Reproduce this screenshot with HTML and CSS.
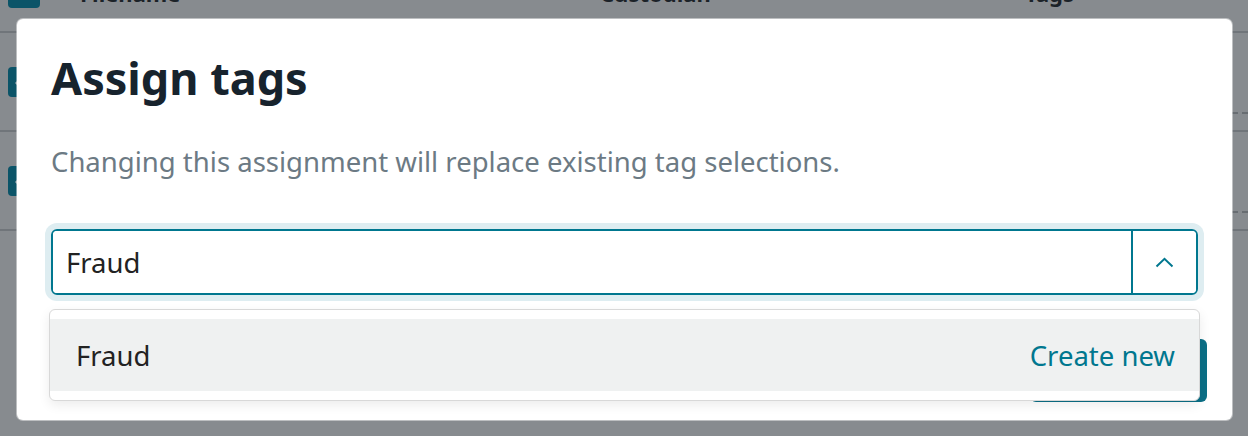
FILE: index.html
```html
<!DOCTYPE html>
<html lang="en">
<head>
    <meta charset="UTF-8">
    <meta name="viewport" content="width=device-width, initial-scale=1.0">
    <title>Assign tags</title>
    <link rel="stylesheet" href="styles.css">
</head>
<body>
    <div class="page">
        <div class="row head">
            <span class="check"><svg width="32" height="30" viewBox="0 0 32 30"><path d="M8 15 L13 20 L24 9" fill="none" stroke="#8fa1a8" stroke-width="3"/></svg></span>
            <span class="col-name">Filename</span>
            <span class="col-cust">Custodian</span>
            <span class="col-tags">Tags</span>
        </div>
        <div class="row">
            <span class="check"><svg width="32" height="30" viewBox="0 0 32 30"><path d="M8 15 L13 20 L24 9" fill="none" stroke="#8fa1a8" stroke-width="3"/></svg></span>
            <span class="tag-line"></span>
        </div>
        <div class="row">
            <span class="check"><svg width="32" height="30" viewBox="0 0 32 30"><path d="M8 15 L13 20 L24 9" fill="none" stroke="#8fa1a8" stroke-width="3"/></svg></span>
            <span class="tag-line"></span>
        </div>
    </div>

    <div class="modal">
        <h1>Assign tags</h1>
        <p class="hint">Changing this assignment will replace existing tag selections.</p>
        <div class="combo">
            <input type="text" class="combo-input" value="Fraud">
            <button class="combo-toggle">
                <svg width="19" height="11" viewBox="0 0 19 11"><path d="M1.5 9.5 L9.5 1.8 L17.5 9.5" fill="none" stroke="#00778f" stroke-width="2"/></svg>
            </button>
        </div>
        <div class="footer">
            <button class="primary">Assign</button>
        </div>
        <ul class="options">
            <li class="option active">
                <span>Fraud</span>
                <span class="create">Create new</span>
            </li>
        </ul>
    </div>
</body>
</html>
```

FILE: styles.css
```css
body {
    margin: 0;
    background-color: #878b8f;
    font-family: 'Noto Sans', 'Open Sans', sans-serif;
    height: 436px;
    overflow: hidden;
    position: relative;
}
.page {
    margin-top: -45px;
}
.row {
    display: flex;
    align-items: center;
    height: 97px;
    border-bottom: 2px solid #70757a;
    position: relative;
}
.row.head {
    height: 76px;
    font-weight: bold;
    font-size: 22px;
    color: #1b2228;
}
.check {
    width: 32px;
    height: 30px;
    margin-left: 8px;
    border-radius: 4px;
    background-color: #0b5468;
}
.check svg {
    display: block;
}
.col-name {
    margin-left: 40px;
    width: 520px;
}
.col-cust {
    width: 425px;
}
.tag-line {
    position: absolute;
    right: 0;
    bottom: 16px;
    width: 16px;
    border-top: 2px dashed #686d72;
}
.modal {
    position: absolute;
    left: 17px;
    top: 19px;
    width: 1215px;
    height: 401px;
    box-sizing: border-box;
    padding: 0 34px;
    background-color: #ffffff;
    border-radius: 6px;
    box-shadow: 0 0 0 1px rgba(255, 255, 255, 0.45);
}
.modal h1 {
    margin: 29px 0 0;
    font-size: 45px;
    line-height: 60px;
    font-weight: bold;
    color: #17232d;
}
.hint {
    margin: 36px 0 0;
    font-size: 27.5px;
    line-height: 36px;
    color: #6c7a84;
}
.combo {
    display: flex;
    margin-top: 49px;
    height: 66px;
    box-sizing: border-box;
    border: 2px solid #00778f;
    border-radius: 6px;
    box-shadow: 0 0 0 6px #deedf1;
    overflow: hidden;
}
.combo-input {
    flex: 1;
    border: none;
    outline: none;
    padding: 0 13px;
    font-family: inherit;
    font-size: 27.5px;
    color: #222222;
}
.combo-toggle {
    width: 65px;
    border: none;
    border-left: 2px solid #00778f;
    background: #ffffff;
    padding: 0;
    display: flex;
    align-items: center;
    justify-content: center;
}
.footer {
    display: flex;
    justify-content: flex-end;
    margin-top: 44px;
    margin-right: -9px;
}
.primary {
    width: 177px;
    height: 63px;
    border: none;
    border-radius: 6px;
    background-color: #0b6f86;
    color: #ffffff;
    font-family: inherit;
    font-size: 24px;
}
.options {
    position: absolute;
    left: 32px;
    top: 290px;
    width: 1149px;
    margin: 0;
    padding: 9px 0;
    list-style: none;
    background-color: #ffffff;
    border: 1px solid #d8d8d8;
    border-radius: 6px;
    box-shadow: 0 4px 12px rgba(0, 0, 0, 0.08);
}
.option {
    display: flex;
    justify-content: space-between;
    align-items: center;
    height: 72px;
    padding: 0 24px 0 26px;
    font-size: 27.5px;
    color: #222222;
}
.option.active {
    background-color: #eff1f1;
}
.create {
    color: #00778f;
}
```
